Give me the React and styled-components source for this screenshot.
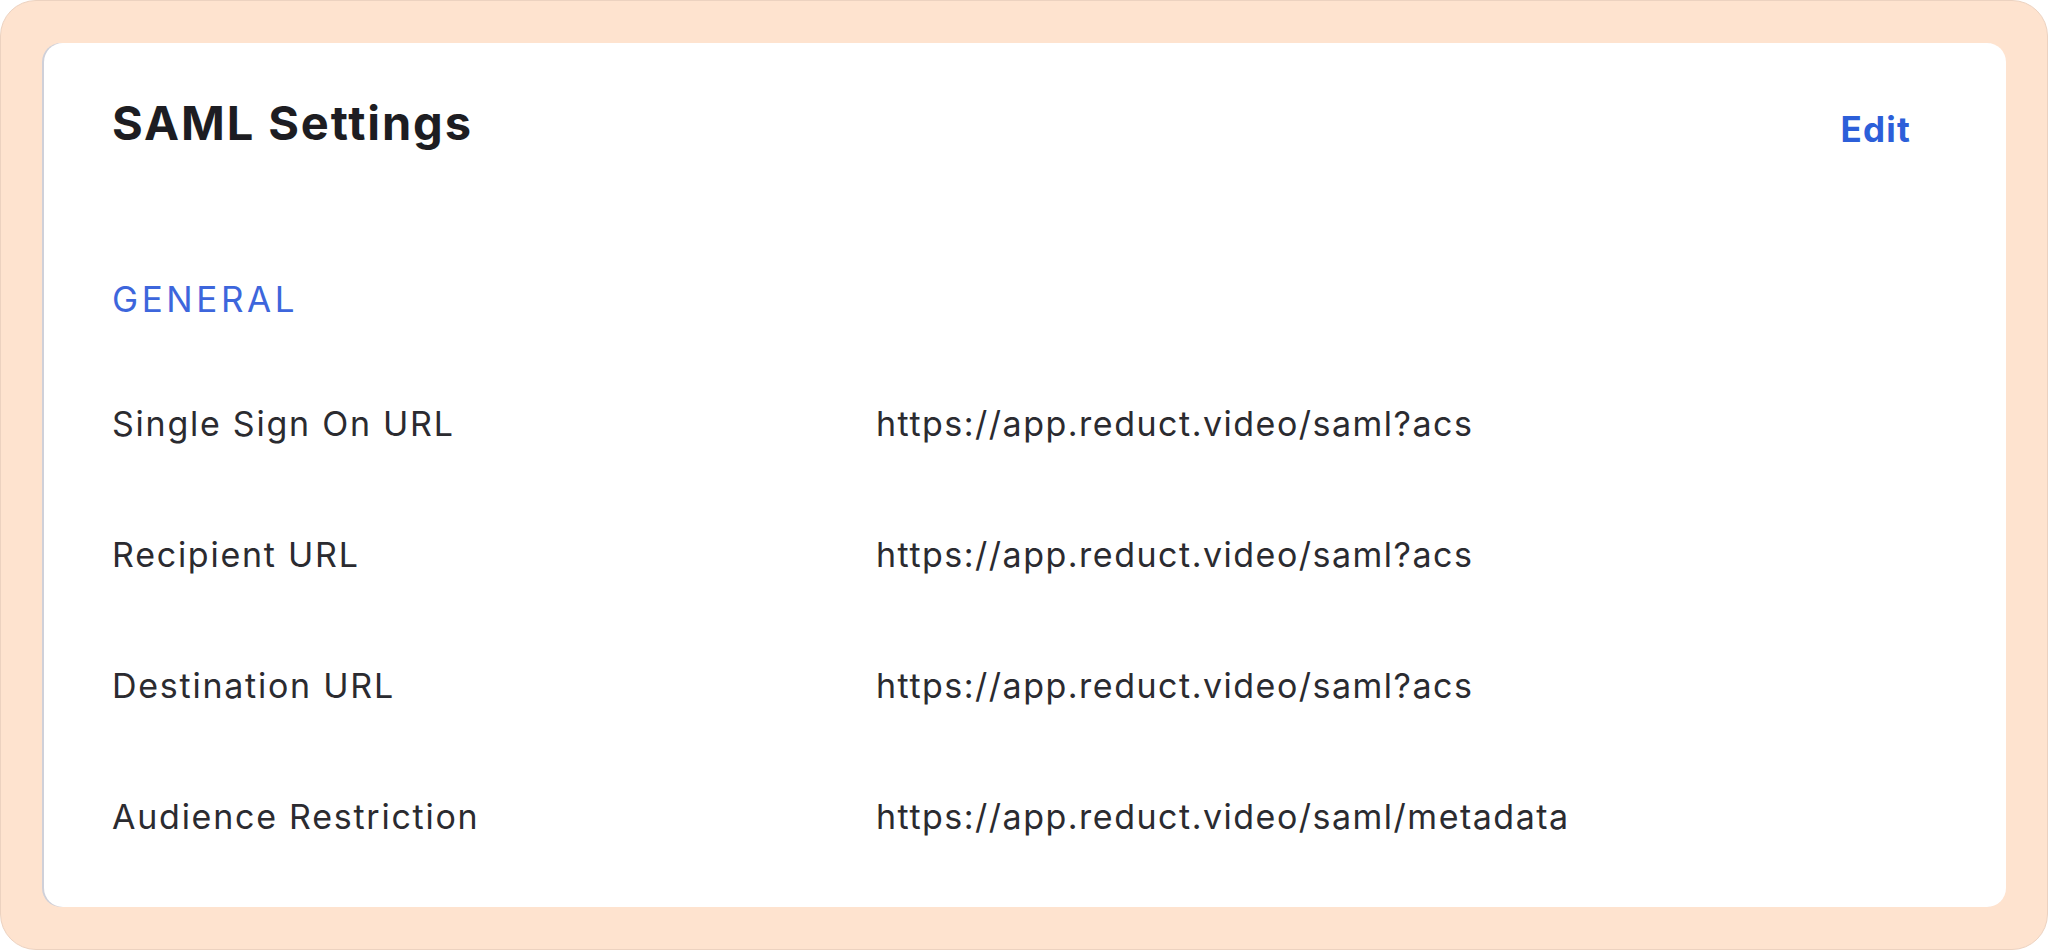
import React from "react";
import styled, { createGlobalStyle } from "styled-components";

const Global = createGlobalStyle`
  html, body { margin: 0; padding: 0; background: #ffffff; }
  body { font-family: Inter, "Noto Sans", "Liberation Sans", sans-serif; }
  * { box-sizing: border-box; }
`;

const Frame = styled.div`
  width: 2048px;
  height: 950px;
  padding: 42px 41px 42px 43px;
  background: #fee3cf;
  border: 1px solid #ecd2c0;
  border-radius: 36px;
  display: flex;
`;

const Card = styled.section`
  flex: 1;
  background: #ffffff;
  border-radius: 19px;
  box-shadow: -2px 0 0 #cfd0d9;
  padding: 56px 95px 0 68px;
  display: flex;
  flex-direction: column;
`;

const Header = styled.header`
  display: flex;
  align-items: baseline;
  justify-content: space-between;
`;

const Title = styled.h1`
  margin: 0;
  font-size: 47px;
  line-height: 1;
  font-weight: 700;
  color: #1d1d22;
  letter-spacing: 1.9px;
`;

const EditButton = styled.button`
  border: 0;
  background: none;
  padding: 0;
  font-family: inherit;
  font-size: 35px;
  line-height: 1;
  font-weight: 700;
  color: #2c5fd9;
  letter-spacing: 1.2px;
  cursor: pointer;
  position: relative;
  top: 2px;
`;

const SectionLabel = styled.h2`
  margin: 136px 0 0;
  font-size: 35px;
  line-height: 1;
  font-weight: 400;
  color: #3d66dc;
  letter-spacing: 3.6px;
`;

const Rows = styled.dl`
  margin: 90px 0 0;
  display: grid;
  grid-template-columns: 764px 1fr;
  row-gap: 97px;
`;

const Label = styled.dt`
  margin: 0;
  font-size: 34px;
  line-height: 1;
  color: #2b2b30;
  letter-spacing: 1.75px;
`;

const Value = styled.dd`
  margin: 0;
  font-size: 34px;
  line-height: 1;
  color: #2b2b30;
  letter-spacing: 1.5px;
`;

const settings = [
  ["Single Sign On URL", "https://app.reduct.video/saml?acs"],
  ["Recipient URL", "https://app.reduct.video/saml?acs"],
  ["Destination URL", "https://app.reduct.video/saml?acs"],
  ["Audience Restriction", "https://app.reduct.video/saml/metadata"],
];

export default function App() {
  return (
    <>
      <Global />
      <Frame>
        <Card>
          <Header>
            <Title>SAML Settings</Title>
            <EditButton>Edit</EditButton>
          </Header>
          <SectionLabel>GENERAL</SectionLabel>
          <Rows>
            {settings.map(([label, value]) => (
              <React.Fragment key={label}>
                <Label>{label}</Label>
                <Value>{value}</Value>
              </React.Fragment>
            ))}
          </Rows>
        </Card>
      </Frame>
    </>
  );
}
